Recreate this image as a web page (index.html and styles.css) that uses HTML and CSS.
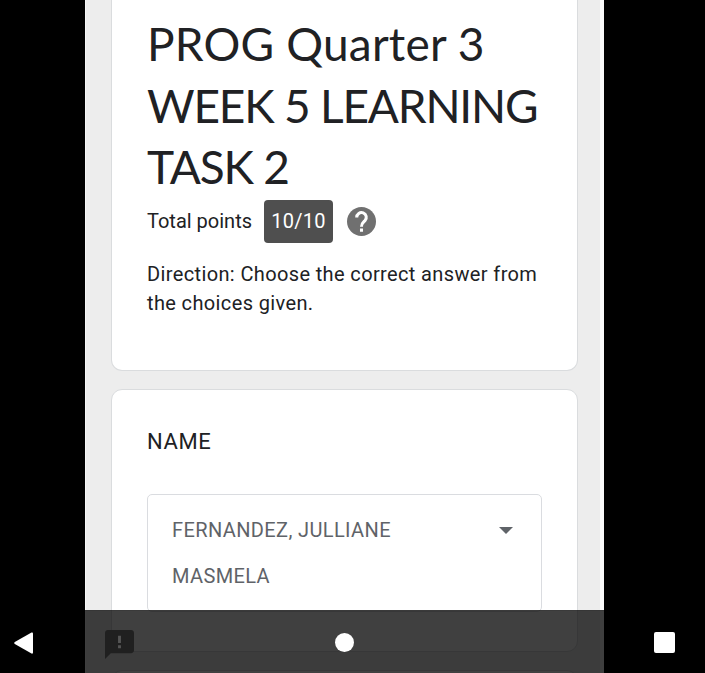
FILE: index.html
```html
<!DOCTYPE html>
<html lang="en">
<head>
<meta charset="utf-8">
<title>PROG Quarter 3 WEEK 5 LEARNING TASK 2</title>
<link rel="stylesheet" href="styles.css">
</head>
<body>
<main class="page">
  <section class="card intro">
    <h1 class="title"><span class="line l1">PROG Quarter 3</span><span class="line l2">WEEK 5 LEARNING</span><span class="line l3">TASK 2</span></h1>
    <div class="score">
      <span class="score-label">Total points</span>
      <span class="badge">10/10</span>
      <svg class="help" viewBox="2 2 20 20"><path fill="#707070" d="M12 2C6.48 2 2 6.48 2 12s4.480 10 10 10 10-4.480 10-10S17.520 2 12 2z"/><path fill="none" stroke="#fff" stroke-width="2.100" d="M8.700 9.200a3.300 3.300 0 1 1 5.700 2.200C13.100 12.700 12 13.300 12 15.600"/><path fill="#fff" d="M10.950 16.900h2.100V19h-2.100z"/></svg>
    </div>
    <p class="direction">Direction: Choose the correct answer from<br>the choices given.</p>
  </section>
  <section class="card question">
    <h2 class="label">NAME</h2>
    <div class="select">
      <span class="value">FERNANDEZ, JULLIANE<br>MASMELA</span>
      <svg class="caret" viewBox="0 0 14 7"><path fill="#5f6368" d="M0 0h14L7 7z"/></svg>
    </div>
  </section>
  <section class="card next"></section>
</main>
<svg class="feedback" viewBox="2 2 20 20"><path fill="#202020" d="M20 2H4c-1.100 0-2 .9-2 2v18l4-4h14c1.100 0 2-.9 2-2V4c0-1.100-.9-2-2-2z"/><path fill="#555" d="M11 6h2v5h-2zM11 12.500h2v2h-2z"/></svg>
<nav class="navbar">
  <svg class="back" viewBox="0 0 19 22"><path fill="#fff" d="M17.500.5Q19 0 19 1.500V20.500Q19 22 17.500 21.500L.8 12Q-.4 11 .8 10z"/></svg>
  <span class="home"></span>
  <span class="recent"></span>
</nav>
</body>
</html>
```
FILE: styles.css
```css
* { box-sizing: border-box; }
body {
  margin: 0;
  height: 673px;
  overflow: hidden;
  background: #000;
  font-family: Roboto, "Liberation Sans", sans-serif;
  color: #202124;
}
.page {
  width: 519px;
  height: 673px;
  margin-left: 85px;
  padding: 0 25px;
  overflow: hidden;
  background: #ededed;
  border-left: 1px solid #f8f8f8;
  border-right: 4px solid #fafafa;
}
.card {
  width: 467px;
  background: #fff;
  border: 1px solid #dadcde;
  border-radius: 11px;
  padding: 0 35px;
}
.intro {
  height: 371px;
  border-top: 0;
  border-radius: 0 0 11px 11px;
  padding-top: 13px;
}
.title {
  margin: 0;
  font: 400 46px/61.5px Lato, "Open Sans", sans-serif;
}
.line { display: block; white-space: nowrap; }
.l1 { letter-spacing: 0.2px; }
.l2 { letter-spacing: -1.2px; }
.l3 { letter-spacing: -1.2px; }
.score {
  display: flex;
  align-items: center;
  height: 43px;
  margin-top: 2px;
  font-size: 20px;
}
.score-label { width: 117px; white-space: nowrap; }
.badge {
  width: 69px;
  height: 43px;
  border-radius: 4px;
  background: #4f4f4f;
  color: #fff;
  line-height: 42px;
  text-align: center;
  letter-spacing: 0.3px;
}
.help { width: 29px; height: 29px; margin-left: 14px; }
.direction {
  margin: 17px 0 0;
  font-size: 20px;
  line-height: 29px;
  letter-spacing: 0.37px;
  white-space: nowrap;
}
.question { height: 263px; margin-top: 18px; padding-top: 37px; }
.label { margin: 0; font-size: 22px; font-weight: 400; line-height: 29px; letter-spacing: 0.6px; }
.select {
  display: flex;
  justify-content: space-between;
  width: 395px;
  height: 118px;
  margin-top: 38px;
  padding: 12px 28px 0 24px;
  border: 1px solid #dadce0;
  border-radius: 5px;
}
.value { font-size: 20px; line-height: 46px; color: #5f6368; letter-spacing: 0.38px; white-space: nowrap; }
.caret { width: 14px; height: 7px; margin-top: 20px; }
.next { height: 60px; margin-top: 18px; }
.navbar {
  position: fixed;
  left: 0;
  right: 0;
  bottom: 0;
  height: 63px;
  display: flex;
  align-items: center;
  justify-content: space-between;
  padding: 1px 30px 0 14px;
  background: rgba(0, 0, 0, 0.75);
  border-top: 1px solid rgba(0, 0, 0, 0.1);
}
.back { width: 19px; height: 22px; }
.home { width: 19px; height: 19px; border-radius: 50%; background: #fff; position: relative; left: 1px; }
.recent { width: 21px; height: 21px; border-radius: 2px; background: #fff; }
.feedback { position: fixed; z-index: 2; left: 105px; top: 630px; width: 29px; height: 29px; }
```
